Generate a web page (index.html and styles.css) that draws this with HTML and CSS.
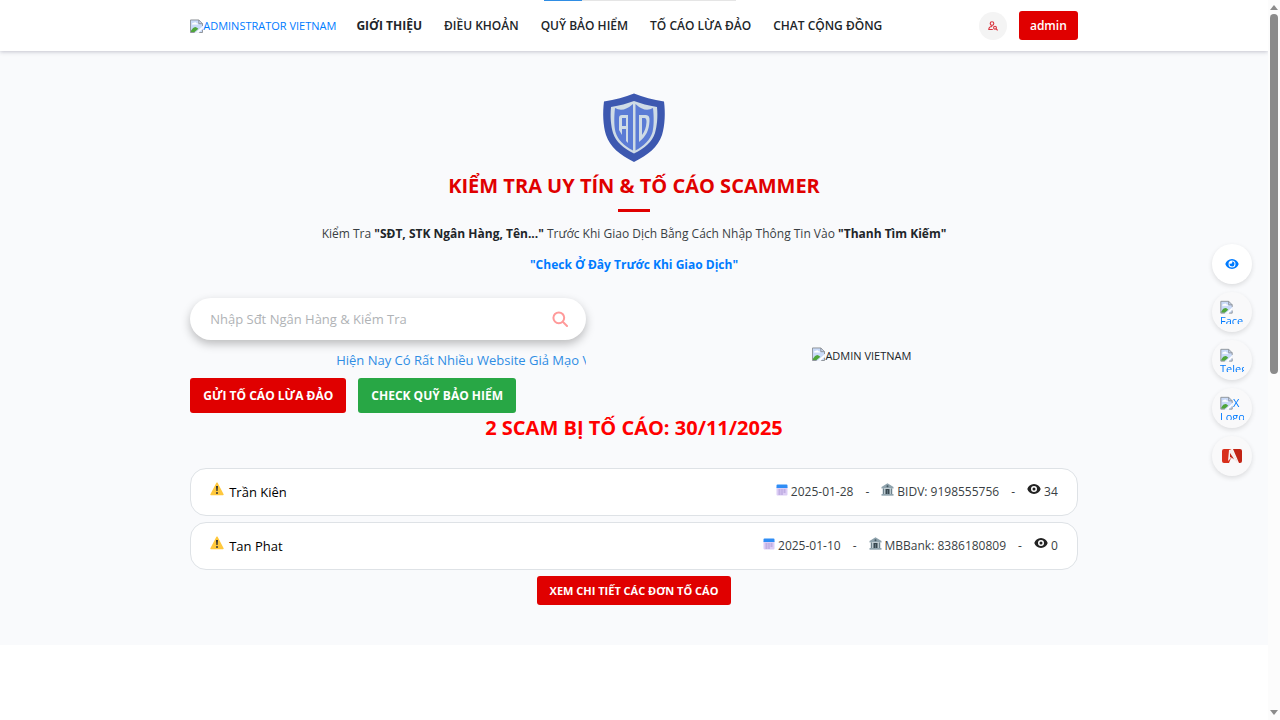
FILE: index.html
```html
<!DOCTYPE html>
<html lang="vi">
<head>
<meta charset="utf-8">
<meta name="viewport" content="width=device-width, initial-scale=1">
<title>ADMIN VIETNAM</title>
<link rel="stylesheet" href="styles.css">
</head>
<body>
<svg class="defs" width="0" height="0" aria-hidden="true">
  <symbol id="broken" viewBox="0 0 14 16">
    <path d="M.5 1.500h9l4 4v9.500H.5z" fill="#c9daf8"/>
    <path d="M2 6.500q0-2 2-2 2-1.500 3 .5 2 0 2 1.500z" fill="#fff"/>
    <path d="M1 14.500V13q3-5 6-3.500l2 1.500-4 3.500z" fill="#4fa63a"/>
    <path d="M6 15l7.500-6.500V11L9.500 15z" fill="#fff"/>
    <path d="M.5 15V1.500h9M.5 15H5M9.500 1.500v4h4zM13.500 5.500V8M10 15h3.500v-3" fill="none" stroke="#8a8f94"/>
  </symbol>
  <symbol id="warn" viewBox="0 0 14 14">
    <path d="M7 1.200 13 12.500H1z" fill="#ffc83d" stroke="#ffc83d" stroke-width="1.400" stroke-linejoin="round"/>
    <path d="M6 4h2l-.4 5H6.400z" fill="#333"/><circle cx="7" cy="11" r="1" fill="#333"/>
  </symbol>
  <symbol id="cal" viewBox="0 0 12 12">
    <path d="M.5 3h11v7.500a1 1 0 0 1-1 1h-9a1 1 0 0 1-1-1z" fill="#dccdf5"/>
    <path d="M.5 4V1.500a1 1 0 0 1 1-1h9a1 1 0 0 1 1 1V4z" fill="#2f8df5"/>
    <path d="M2.500 6h2M5.200 6h1.600M7.500 6h2M2.500 8h2M5.200 8h1.600M7.500 8h2M2.500 10h2M5.200 10h1.600" stroke="#a48fd0"/>
  </symbol>
  <symbol id="bank" viewBox="0 0 13 13">
    <path d="M6.500.3 12.500 4v1.500H.5V4z" fill="#8fa3ad"/>
    <path d="M1.500 5.500h10V11h-10z" fill="#b8c7ce"/>
    <path d="M2.500 5.500V11M10.500 5.500V11" stroke="#6e828c"/>
    <path d="M4.500 6h4v5h-4z" fill="#37474f"/><path d="M6.500 7v4" stroke="#78909c" stroke-width=".6"/>
    <path d="M.5 11h12v1.700H.5z" fill="#90a4ae"/><circle cx="6.500" cy="3.300" r="1" fill="#455a64"/>
  </symbol>
  <symbol id="eye" viewBox="0 0 14 12">
    <path fill="currentColor" fill-rule="evenodd" d="M7 1C3.700 1 1.200 3.200.3 6c.9 2.800 3.400 5 6.700 5s5.800-2.200 6.700-5C12.800 3.200 10.300 1 7 1zM7 2.500a3.500 3.500 0 1 1 0 7 3.500 3.500 0 0 1 0-7z"/>
    <path fill="currentColor" d="M7 3.600A2.400 2.400 0 1 1 4.800 5.200 1.300 1.300 0 0 0 7 3.600z"/>
  </symbol>
  <symbol id="eye-dark" viewBox="0 0 14 12">
    <path fill="#222" fill-rule="evenodd" d="M7 1C3.700 1 1.200 3.200.3 6c.9 2.800 3.400 5 6.700 5s5.800-2.200 6.700-5C12.800 3.200 10.300 1 7 1zM7 3a3 3 0 1 1 0 6 3 3 0 0 1 0-6zM7 4.500a1.500 1.500 0 1 0 0 3 1.500 1.500 0 0 0 0-3z"/>
  </symbol>
</svg>

<div class="progress"><div class="progress-fill"></div></div>
<div class="page">
  <header class="header">
    <div class="container header-row">
      <a class="brand" href="#"><svg class="broken"><use href="#broken"/></svg>ADMINSTRATOR VIETNAM</a>
      <nav class="nav">
        <a class="active" href="#">GIỚI THIỆU</a>
        <a href="#">ĐIỀU KHOẢN</a>
        <a href="#">QUỸ BẢO HIỂM</a>
        <a href="#">TỐ CÁO LỪA ĐẢO</a>
        <a href="#">CHAT CỘNG ĐỒNG</a>
      </nav>
      <button class="user-search" type="button" aria-label="Tìm người dùng">
        <svg width="10" height="10" viewBox="0 0 10 10" fill="none" stroke="#d9303a" stroke-width="1.100"><circle cx="4" cy="2.600" r="1.800"/><path d="M4.800 8.500H.8c0-2 1.200-3 3.400-3"/><circle cx="7" cy="6.700" r="1.400"/><path d="m8 7.700 1.600 1.700"/></svg>
      </button>
      <a class="btn btn-red btn-admin" href="#">admin</a>
    </div>
  </header>

  <main class="main">
    <div class="container">
      <section class="intro">
        <svg class="shield" viewBox="0 0 64 70" aria-hidden="true">
          <path d="M32 .5C23 4 13 7 2 8.500.5 20 1 32 4 42c4 12 14 20 28 27 14-7 24-15 28-27 3-10 3.500-22 2-33.500C51 7 41 4 32 .5z" fill="#3d58b0"/>
          <path d="M32 8c-7 2.500-14 4.500-23 6-1 10 0 19 2 26 3 9 10 15 21 20.500C43 55 50 49 53 40c2-7 3-16 2-26-9-1.500-16-3.500-23-6z" fill="#cfdbe6"/>
          <path d="M31 11v46.500C22 53 16 47 13.500 39 12 33 12 24 13 15q8 5 18-4zM33.500 11v46.500C42 53 48 47 50.500 39 52 33 52 24 51 15q-8 5-17.500-4z" fill="#5b7bd5"/>
          <path d="M26 22v28l-2-2V36h-4v-3h4v-8h-4v17l-3-5V25q0-3 3-3zM37 22h7q4 0 3.500 6c-.5 9-3 15-10.500 21zM40 25v17q4-5 4.500-13 0-4-2-4z" fill="#cfdbe6" fill-rule="evenodd"/>
        </svg>
        <h1 class="title">KIỂM TRA UY TÍN &amp; TỐ CÁO SCAMMER</h1>
        <p class="lead">Kiểm Tra <b>"SĐT, STK Ngân Hàng, Tên..."</b> Trước Khi Giao Dịch Bằng Cách Nhập Thông Tin Vào <b>"Thanh Tìm Kiếm"</b></p>
        <a class="check" href="#">"Check Ở Đây Trước Khi Giao Dịch"</a>
      </section>

      <section class="split">
        <div class="split-left">
          <form class="search">
            <input class="search-input" type="text" aria-label="Nhập Sđt Ngân Hàng &amp; Kiểm Tra" placeholder="Nhập Sđt Ngân Hàng &amp; Kiểm Tra">
            <button class="search-btn" type="button" aria-label="Tìm kiếm"><svg width="16" height="16" viewBox="0 0 16 16" fill="none" stroke="#ff9a9a" stroke-width="2" stroke-linecap="round"><circle cx="6.800" cy="6.800" r="5.400"/><path d="m11 11 4 4"/></svg></button>
          </form>
          <div class="ticker"><span>Hiện Nay Có Rất Nhiều Website Giả Mạo V</span></div>
          <div class="actions">
            <a class="btn btn-red" href="#">GỬI TỐ CÁO LỪA ĐẢO</a>
            <a class="btn btn-green" href="#">CHECK QUỸ BẢO HIỂM</a>
          </div>
        </div>
        <div class="split-right"><svg class="broken"><use href="#broken"/></svg>ADMIN VIETNAM</div>
      </section>

      <section class="reports">
        <h2 class="subtitle">2 SCAM BỊ TỐ CÁO: 30/11/2025</h2>
        <a class="card" href="#">
          <span class="name"><svg class="warn"><use href="#warn"/></svg>Trần Kiên</span>
          <span class="meta">
            <span class="item"><svg class="cal"><use href="#cal"/></svg>2025-01-28</span><span>-</span>
            <span class="item"><svg class="bank"><use href="#bank"/></svg>BIDV: 9198555756</span><span>-</span>
            <span class="item"><svg class="eye"><use href="#eye-dark"/></svg>34</span>
          </span>
        </a>
        <a class="card" href="#">
          <span class="name"><svg class="warn"><use href="#warn"/></svg>Tan Phat</span>
          <span class="meta">
            <span class="item"><svg class="cal"><use href="#cal"/></svg>2025-01-10</span><span>-</span>
            <span class="item"><svg class="bank"><use href="#bank"/></svg>MBBank: 8386180809</span><span>-</span>
            <span class="item"><svg class="eye"><use href="#eye-dark"/></svg>0</span>
          </span>
        </a>
        <a class="btn btn-red btn-more" href="#">XEM CHI TIẾT CÁC ĐƠN TỐ CÁO</a>
      </section>
    </div>
  </main>
</div>

<aside class="social">
  <a class="round round-white" href="#" aria-label="Xem"><svg class="eye"><use href="#eye"/></svg></a>
  <a class="round" href="#"><span class="alt"><svg class="broken"><use href="#broken"/></svg> Facebook</span></a>
  <a class="round" href="#"><span class="alt"><svg class="broken"><use href="#broken"/></svg> Telegram</span></a>
  <a class="round" href="#"><span class="alt"><svg class="broken"><use href="#broken"/></svg>X Logo</span></a>
  <a class="round" href="#" aria-label="Logo"><svg width="22" height="16" viewBox="0 0 22 16"><path d="M3 1h7l6 12-6-3-2 5H3q-2 0-2-2V3q0-2 2-2z" fill="#d8301c"/><path d="M12 1h7q2 0 2 2v10q0 2-2 2h-1z" fill="#c22414"/><path d="M8 2 7 13l3-3 7 5L11 1z" fill="#f7efed"/><path d="m9 5 4 6-4-2z" fill="#c22414"/></svg></a>
</aside>

<div class="scrollbar" aria-hidden="true">
  <svg width="8" height="5" viewBox="0 0 8 5"><path d="M4 0 8 5H0z" fill="#8b8b8b"/></svg>
  <div class="track"><div class="thumb"></div></div>
  <svg width="8" height="5" viewBox="0 0 8 5"><path d="M0 0h8L4 5z" fill="#8b8b8b"/></svg>
</div>
</body>
</html>
```
FILE: styles.css
```css
* { box-sizing: border-box; }

body {
  margin: 0;
  display: flex;
  min-height: 100vh;
  background: #fff;
  color: #212529;
  font: 13px/20px "Open Sans", "Noto Sans", sans-serif;
}

a { color: #007bff; text-decoration: none; }
button { border: 0; padding: 0; cursor: pointer; font: inherit; }
svg { display: block; flex: none; }
.defs { position: absolute; }
.broken { width: 13px; height: 16px; }

.page { flex: 1; min-width: 0; }
.container { width: 70%; margin: 0 auto; }

.progress {
  position: fixed;
  top: 0;
  left: 50%;
  width: 192px;
  height: 1px;
  margin-left: -96px;
  background: #e5e5e5;
  z-index: 5;
}
.progress-fill { width: 20%; height: 100%; background: #2f8de4; }

.header {
  position: relative;
  background: #fff;
  box-shadow: 0 1px 4px rgba(40, 40, 70, .25);
}
.header-row { display: flex; align-items: center; height: 51px; }
.brand { display: flex; align-items: center; font-size: 11px; white-space: nowrap; }
.nav { display: flex; flex: 1; gap: 22px; margin-left: 20px; font-size: 12px; white-space: nowrap; }
.nav a { color: #212529; font-weight: 600; }
.nav .active { font-weight: 700; }
.user-search {
  display: grid;
  place-items: center;
  width: 28px;
  height: 28px;
  margin-right: 12px;
  border-radius: 50%;
  background: #f4f4f4;
}

.btn {
  padding: 8px 13px;
  border-radius: 3px;
  color: #fff;
  font-size: 12px;
  font-weight: 700;
  line-height: 19px;
  white-space: nowrap;
}
.btn-red { background: #e00000; }
.btn-green { background: #28a745; }
.btn-admin { padding: 5px 11px; font-weight: 600; }

.main { padding: 42px 0 40px; background: #f9fafc; }

.intro { display: flex; flex-direction: column; align-items: center; text-align: center; }
.shield { width: 64px; height: 70px; }
.title { margin: 8px 0 0; color: #e00000; font-size: 20px; font-weight: 700; line-height: 30px; }
.title::after {
  content: "";
  display: block;
  width: 32px;
  height: 3px;
  margin: 8px auto 0;
  background: #e00000;
}
.lead { margin: 12px 0 11px; color: #3a3f44; font-size: 12px; }
.lead b { color: #212529; }
.check { font-size: 12px; font-weight: 700; }

.split {
  display: grid;
  grid-template-columns: minmax(0, 11fr) minmax(0, 12fr);
  gap: 60px;
  align-items: center;
  margin-top: 23px;
}
.search {
  display: flex;
  align-items: center;
  height: 42px;
  padding: 0 18px 0 20px;
  border-radius: 21px;
  background: #fff;
  box-shadow: 0 4px 10px rgba(0, 0, 0, .25);
}
.search-input {
  flex: 1;
  min-width: 0;
  padding: 0;
  border: 0;
  outline: 0;
  background: none;
  font: inherit;
}
.search-input::placeholder { color: #b0b3b6; opacity: 1; }
.search-btn { background: none; }
.ticker {
  margin: 10px 0 8px;
  padding-left: 146px;
  overflow: hidden;
  color: #2f8de4;
  font-weight: 500;
  white-space: nowrap;
}
.actions { display: flex; gap: 12px; }
.split-right { display: flex; justify-content: center; font-size: 11px; }

.reports { display: flex; flex-direction: column; }
.subtitle { margin: 0 0 25px; color: #f00; font-size: 20px; font-weight: 700; line-height: 30px; text-align: center; }
.card {
  display: flex;
  align-items: center;
  justify-content: space-between;
  height: 48px;
  margin-bottom: 6px;
  padding: 0 19px;
  border: 1px solid #dee2e6;
  border-radius: 16px;
  background: #fff;
  color: #3a3f44;
}
.name { display: flex; gap: 5px; color: #000; font-weight: 500; }
.warn { width: 14px; height: 14px; }
.meta { display: flex; gap: 12px; font-size: 12px; }
.item { display: flex; gap: 3px; }
.cal { width: 12px; height: 12px; margin-top: 2px; }
.bank { width: 13px; height: 13px; margin-top: 1px; }
.eye { width: 14px; height: 12px; }
.item .eye { margin-top: 1px; }
.btn-more { align-self: center; padding: 5px 13px; font-size: 11px; }

.social {
  position: fixed;
  top: 50%;
  right: 28px;
  display: flex;
  flex-direction: column;
  gap: 8px;
  transform: translateY(-50%);
}
.round {
  display: grid;
  place-items: center;
  width: 40px;
  height: 40px;
  border-radius: 50%;
  background: #f9f9fa;
  box-shadow: 0 2px 5px rgba(0, 0, 0, .12);
}
.round-white { background: #fff; }
.alt { width: 24px; height: 24px; overflow: hidden; font-size: 11px; line-height: 14px; }
.alt svg { display: inline-block; height: 14px; vertical-align: top; }

.scrollbar {
  position: sticky;
  top: 0;
  display: flex;
  flex-direction: column;
  align-items: center;
  gap: 4px;
  width: 12px;
  height: 100vh;
  padding: 5px 0;
  background: #fcfcfc;
}
.track { flex: 1; }
.thumb { width: 8px; height: 52%; border-radius: 4px; background: #8b8b8b; }
```
